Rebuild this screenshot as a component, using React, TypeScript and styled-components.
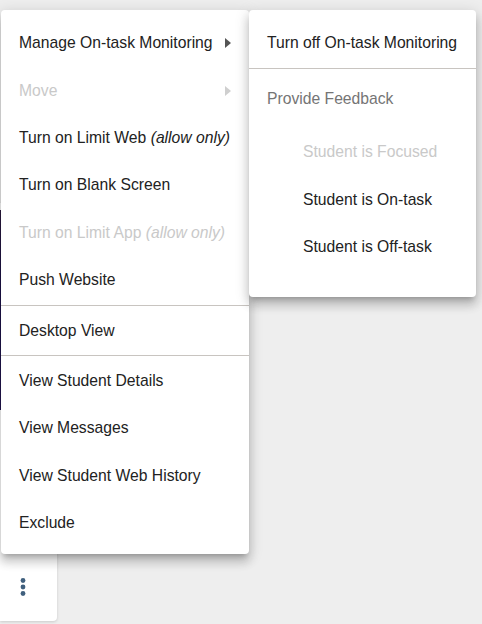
import React from "react"
import styled, { createGlobalStyle } from "styled-components"

const GlobalStyle = createGlobalStyle`
  html, body {
    margin: 0;
    padding: 0;
    background: #eeeeee;
    font-family: "Liberation Sans", Arial, sans-serif;
  }
`

const Page = styled.div`
  position: relative;
  width: 482px;
  height: 624px;
  overflow: hidden;
  padding-top: 203px;
  box-sizing: border-box;
`

const Tile = styled.div`
  width: 57px;
  height: 418px;
  background: #fff;
  border-radius: 0 0 4px 0;
  box-shadow: 0 1px 3px rgba(0, 0, 0, 0.15);
  display: flex;
  flex-direction: column;
`

const Thumbnail = styled.div`
  margin-top: 7px;
  height: 200px;
  background: linear-gradient(180deg, #2a1a3e 0%, #1b1246 40%, #231650 100%);
`

const TileFooter = styled.div`
  margin-top: auto;
  height: 68px;
  display: flex;
  align-items: center;
  padding-left: 20px;
`

const MenuLayer = styled.div`
  position: absolute;
  left: 1px;
  top: 10px;
  display: flex;
  align-items: flex-start;
`

const MenuPanel = styled.div<{ $width: number; $padBottom: number }>`
  position: relative;
  width: ${p => p.$width}px;
  background: #fff;
  border-radius: 4px;
  padding: 9.5px 0 ${p => p.$padBottom}px;
  box-sizing: border-box;
  box-shadow: 0px 5px 5px -3px rgba(0, 0, 0, 0.2),
    0px 8px 10px 1px rgba(0, 0, 0, 0.14), 0px 3px 14px 2px rgba(0, 0, 0, 0.12);
`

const SubPanel = styled(MenuPanel)`
  z-index: 2;
`

const Item = styled.div<{ $disabled?: boolean; $indent?: number; $height?: number }>`
  height: ${p => p.$height ?? 47.4}px;
  display: flex;
  align-items: center;
  justify-content: space-between;
  padding: 0 18px 0 ${p => p.$indent ?? 18}px;
  font-size: 15.7px;
  color: ${p => (p.$disabled ? "#c9c9c9" : "#222222")};
  white-space: nowrap;
`

const Header = styled.div`
  height: 58px;
  display: flex;
  align-items: center;
  padding-left: 18px;
  font-size: 15.7px;
  color: #757575;
`

const Divider = styled.div`
  height: 1px;
  margin: 1px 0;
  background: #c8c4c0;
`

const Arrow = styled.span<{ $disabled?: boolean }>`
  width: 0;
  height: 0;
  border-top: 5px solid transparent;
  border-bottom: 5px solid transparent;
  border-left: 6px solid ${p => (p.$disabled ? "#cfcfcf" : "#555555")};
`

const DotsIcon = () => (
  <svg width="6" height="20" viewBox="0 0 6 20">
    <circle cx="3" cy="3.5" r="2.4" fill="#40607e" />
    <circle cx="3" cy="10" r="2.4" fill="#40607e" />
    <circle cx="3" cy="16.5" r="2.4" fill="#40607e" />
  </svg>
)

const App: React.FC = () => (
  <>
    <GlobalStyle />
    <Page>
      <Tile>
        <Thumbnail />
        <TileFooter>
          <DotsIcon />
        </TileFooter>
      </Tile>

      <MenuLayer>
        <MenuPanel $width={248} $padBottom={7.5}>
          <Item>
            Manage On-task Monitoring
            <Arrow />
          </Item>
          <Item $disabled>
            Move
            <Arrow $disabled />
          </Item>
          <Item>
            <span>
              Turn on Limit Web <i>(allow only)</i>
            </span>
          </Item>
          <Item>Turn on Blank Screen</Item>
          <Item $disabled>
            <span>
              Turn on Limit App <i>(allow only)</i>
            </span>
          </Item>
          <Item>Push Website</Item>
          <Divider />
          <Item>Desktop View</Item>
          <Divider />
          <Item>View Student Details</Item>
          <Item>View Messages</Item>
          <Item>View Student Web History</Item>
          <Item>Exclude</Item>
        </MenuPanel>

        <SubPanel $width={227} $padBottom={26.5}>
          <Item>Turn off On-task Monitoring</Item>
          <Divider />
          <Header>Provide Feedback</Header>
          <Item $disabled $indent={54} $height={48}>
            Student is Focused
          </Item>
          <Item $indent={54}>Student is On-task</Item>
          <Item $indent={54}>Student is Off-task</Item>
        </SubPanel>
      </MenuLayer>
    </Page>
  </>
)

export default App
